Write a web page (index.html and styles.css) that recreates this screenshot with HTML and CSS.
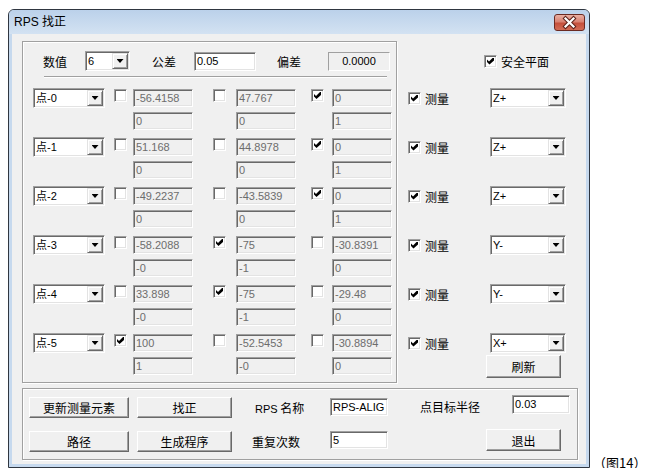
FILE: index.html
```html
<!DOCTYPE html>
<html lang="zh">
<head>
    <meta charset="UTF-8">
    <title>RPS 找正</title>
    <link rel="stylesheet" href="styles.css">
</head>
<body>
<div class="page">
    <div class="window">
        <div class="titlebar">
            <span class="title">RPS 找正</span>
            <span class="close">
                <svg width="29" height="15" viewBox="0 0 29 15">
                    <path d="M10.5 3.5 L18.5 11.5 M18.5 3.5 L10.5 11.5" stroke="#5c2119" stroke-width="4.2" stroke-linecap="square"/>
                    <path d="M10.5 3.5 L18.5 11.5 M18.5 3.5 L10.5 11.5" stroke="#fff" stroke-width="2.2" stroke-linecap="square"/>
                </svg>
            </span>
        </div>
        <div class="client">
            <div class="upper">
                <div class="group main-group">
                    <div class="head">
                        <span class="lbl">数值</span>
                        <div class="combo small"><span class="val">6</span><span class="drop"></span></div>
                        <span class="lbl">公差</span>
                        <div class="edit tol">0.05</div>
                        <span class="lbl">偏差</span>
                        <div class="static">0.0000</div>
                    </div>
                    <div class="sep"></div>
                    <div class="points">
                        <div class="pt-row">
                            <div class="combo"><span class="val">点-0</span><span class="drop"></span></div>
                            <span class="cb"></span>
                            <div class="edit dis">-56.4158</div>
                            <span class="cb"></span>
                            <div class="edit dis">47.767</div>
                            <span class="cb on"></span>
                            <div class="edit dis">0</div>
                            <div class="edit dis lo c3">0</div>
                            <div class="edit dis lo c5">0</div>
                            <div class="edit dis lo c7">1</div>
                        </div>
                        <div class="pt-row">
                            <div class="combo"><span class="val">点-1</span><span class="drop"></span></div>
                            <span class="cb"></span>
                            <div class="edit dis">51.168</div>
                            <span class="cb"></span>
                            <div class="edit dis">44.8978</div>
                            <span class="cb on"></span>
                            <div class="edit dis">0</div>
                            <div class="edit dis lo c3">0</div>
                            <div class="edit dis lo c5">0</div>
                            <div class="edit dis lo c7">1</div>
                        </div>
                        <div class="pt-row">
                            <div class="combo"><span class="val">点-2</span><span class="drop"></span></div>
                            <span class="cb"></span>
                            <div class="edit dis">-49.2237</div>
                            <span class="cb"></span>
                            <div class="edit dis">-43.5839</div>
                            <span class="cb on"></span>
                            <div class="edit dis">0</div>
                            <div class="edit dis lo c3">0</div>
                            <div class="edit dis lo c5">0</div>
                            <div class="edit dis lo c7">1</div>
                        </div>
                        <div class="pt-row">
                            <div class="combo"><span class="val">点-3</span><span class="drop"></span></div>
                            <span class="cb"></span>
                            <div class="edit dis">-58.2088</div>
                            <span class="cb on"></span>
                            <div class="edit dis">-75</div>
                            <span class="cb"></span>
                            <div class="edit dis">-30.8391</div>
                            <div class="edit dis lo c3">-0</div>
                            <div class="edit dis lo c5">-1</div>
                            <div class="edit dis lo c7">0</div>
                        </div>
                        <div class="pt-row">
                            <div class="combo"><span class="val">点-4</span><span class="drop"></span></div>
                            <span class="cb"></span>
                            <div class="edit dis">33.898</div>
                            <span class="cb on"></span>
                            <div class="edit dis">-75</div>
                            <span class="cb"></span>
                            <div class="edit dis">-29.48</div>
                            <div class="edit dis lo c3">-0</div>
                            <div class="edit dis lo c5">-1</div>
                            <div class="edit dis lo c7">0</div>
                        </div>
                        <div class="pt-row">
                            <div class="combo"><span class="val">点-5</span><span class="drop"></span></div>
                            <span class="cb on"></span>
                            <div class="edit dis">100</div>
                            <span class="cb"></span>
                            <div class="edit dis">-52.5453</div>
                            <span class="cb"></span>
                            <div class="edit dis">-30.8894</div>
                            <div class="edit dis lo c3">1</div>
                            <div class="edit dis lo c5">-0</div>
                            <div class="edit dis lo c7">0</div>
                        </div>
                    </div>
                </div>
                <div class="side">
                    <div class="side-head">
                        <span class="cb on"></span>
                        <span class="lbl">安全平面</span>
                    </div>
                    <div class="side-rows">
                        <div class="side-row"><span class="cb on"></span><span class="lbl">测量</span><div class="combo dir"><span class="val">Z+</span><span class="drop"></span></div></div>
                        <div class="side-row"><span class="cb on"></span><span class="lbl">测量</span><div class="combo dir"><span class="val">Z+</span><span class="drop"></span></div></div>
                        <div class="side-row"><span class="cb on"></span><span class="lbl">测量</span><div class="combo dir"><span class="val">Z+</span><span class="drop"></span></div></div>
                        <div class="side-row"><span class="cb on"></span><span class="lbl">测量</span><div class="combo dir"><span class="val">Y-</span><span class="drop"></span></div></div>
                        <div class="side-row"><span class="cb on"></span><span class="lbl">测量</span><div class="combo dir"><span class="val">Y-</span><span class="drop"></span></div></div>
                        <div class="side-row"><span class="cb on"></span><span class="lbl">测量</span><div class="combo dir"><span class="val">X+</span><span class="drop"></span></div></div>
                    </div>
                    <div class="btn refresh">刷新</div>
                </div>
            </div>
            <div class="group bottom-group">
                <div class="btn wide">更新测量元素</div>
                <div class="btn mid">找正</div>
                <span class="lbl name-lbl"><span class="latin">RPS</span> 名称</span>
                <div class="edit short top">RPS-ALIG</div>
                <span class="lbl radius-lbl">点目标半径</span>
                <div class="edit short radius">0.03</div>
                <div class="btn wide">路径</div>
                <div class="btn mid">生成程序</div>
                <span class="lbl">重复次数</span>
                <div class="edit short">5</div>
                <div class="btn exit">退出</div>
            </div>
        </div>
    </div>
    <div class="caption">（图14）</div>
</div>
</body>
</html>
```

FILE: styles.css
```css
body {
    margin: 0;
    background: #fff;
    font-family: "Liberation Sans", "Noto Sans CJK SC", sans-serif;
    font-size: 11px;
    color: #000;
}
.page {
    display: flex;
    align-items: flex-end;
    padding: 9px 0 0 8px;
}
.window {
    flex-shrink: 0;
    width: 582px;
    height: 459px;
    box-sizing: border-box;
    border: 1px solid #2f3640;
    border-radius: 6px 6px 0 0;
    background: #c6d9ee;
    display: flex;
    flex-direction: column;
}
.titlebar {
    height: 24px;
    display: flex;
    justify-content: space-between;
    align-items: flex-start;
    background: linear-gradient(#bbd1ea, #d3e2f2);
    border-radius: 5px 5px 0 0;
}
.title {
    padding: 5px 0 0 5px;
    font-size: 12px;
    line-height: 14px;
}
.close {
    margin: 4px 4px 0 0;
    width: 31px;
    height: 17px;
    box-sizing: border-box;
    border: 1px solid #6b2a22;
    border-radius: 3px;
    background: linear-gradient(#eab0a3, #d98272 45%, #c5503c 55%, #d26c56);
    display: flex;
}
.client {
    flex: 1;
    margin: 0 3px 3px;
    background: #f0f0f0;
}
.upper {
    display: flex;
    align-items: flex-start;
    padding: 7px 0 0 10px;
}
.group {
    box-sizing: border-box;
    border: 1px solid #a0a0a0;
    box-shadow: inset 1px 1px #fff, 1px 1px #fff;
}
.main-group {
    width: 375px;
    height: 342px;
    padding-top: 9px;
}
.lbl {
    font-family: "Noto Sans CJK SC", sans-serif;
    font-size: 12px;
    white-space: nowrap;
}
.latin {
    font-family: "Liberation Sans", sans-serif;
    font-size: 11px;
}
.head {
    display: grid;
    grid-template-columns: 42px 67px 42px 83px 51px 62px;
    height: 20px;
    align-items: center;
    padding-left: 20px;
}
.sep {
    margin: 5px 0 0 21px;
    width: 343px;
    height: 0;
    border-top: 1px solid #a0a0a0;
    border-bottom: 1px solid #fff;
}
.points {
    display: flex;
    flex-direction: column;
    gap: 7px;
    margin-top: 10px;
    padding-left: 10px;
}
.pt-row {
    display: grid;
    grid-template-columns: 81px 19px 80px 23px 75px 21px 60px;
    grid-template-rows: 24px 18px;
    align-items: start;
}
.pt-row .cb,
.pt-row .edit {
    margin-top: 1px;
}
.pt-row .lo {
    margin-top: 0;
}
.c3 { grid-column: 3; }
.c5 { grid-column: 5; }
.c7 { grid-column: 7; }

/* sunken controls */
.edit,
.combo,
.cb {
    box-sizing: border-box;
    border: 1px solid;
    border-color: #a0a0a0 #fff #fff #a0a0a0;
    box-shadow: inset 1px 1px #696969, inset -1px -1px #e3e3e3;
    background: #fff;
}
.edit {
    width: 60px;
    height: 18px;
    padding-left: 2px;
    line-height: 16px;
    white-space: nowrap;
    overflow: hidden;
}
.edit.dis {
    background: #f0f0f0;
    color: #6d6d6d;
}
.edit.tol {
    width: 62px;
    height: 19px;
    line-height: 17px;
}
.static {
    box-sizing: border-box;
    width: 62px;
    height: 19px;
    border: 1px solid;
    border-color: #a0a0a0 #fff #fff #a0a0a0;
    text-align: center;
    line-height: 17px;
}
.combo {
    width: 72px;
    height: 20px;
    padding: 1px;
    display: flex;
}
.combo.small {
    width: 45px;
}
.combo.dir {
    width: 76px;
}
.combo .val {
    flex: 1;
    padding-left: 1px;
    line-height: 16px;
    white-space: nowrap;
}
.drop {
    box-sizing: border-box;
    width: 16px;
    height: 16px;
    border: 1px solid;
    border-color: #e3e3e3 #696969 #696969 #e3e3e3;
    box-shadow: inset 1px 1px #fff, inset -1px -1px #a0a0a0;
    background: #f0f0f0;
    display: flex;
    align-items: center;
    justify-content: center;
}
.drop::after {
    content: "";
    width: 7px;
    height: 4px;
    background: #000;
    clip-path: polygon(0 0, 100% 0, 50% 100%);
}
.cb {
    width: 13px;
    height: 13px;
    display: flex;
    align-items: center;
    justify-content: center;
}
.cb.on::after {
    content: "";
    width: 7px;
    height: 7px;
    background: #000;
    clip-path: polygon(0 2px, 2px 4px, 6px 0, 7px 0, 7px 3px, 2.5px 7px, 0 4.5px);
}

/* raised buttons */
.btn {
    box-sizing: border-box;
    display: flex;
    align-items: center;
    justify-content: center;
    background: #f0f0f0;
    border: 1px solid;
    border-color: #fff #696969 #696969 #fff;
    box-shadow: inset -1px -1px #a0a0a0;
    font-family: "Noto Sans CJK SC", sans-serif;
    font-size: 12px;
    white-space: nowrap;
}

.side {
    padding-top: 10px;
    display: flex;
    flex-direction: column;
}
.side-head {
    height: 20px;
    display: flex;
    align-items: center;
    padding-left: 87px;
}
.side-head .lbl {
    margin-left: 4px;
}
.side-rows {
    margin-top: 17px;
    display: flex;
    flex-direction: column;
    gap: 29px;
}
.side-row {
    height: 20px;
    display: flex;
    align-items: center;
    padding-left: 11px;
}
.side-row .lbl {
    margin-left: 4px;
    width: 65px;
}
.refresh {
    margin: 2px 0 0 89px;
    width: 75px;
    height: 23px;
}

.bottom-group {
    margin: 5px 0 0 10px;
    width: 556px;
    height: 72px;
    padding: 6px 0 0 6px;
    display: grid;
    grid-template-columns: 108px 115px 78px 90px 66px 1fr;
    grid-template-rows: 34px 24px;
    align-items: start;
}
.bottom-group .btn {
    height: 21px;
    margin-top: 2px;
}
.btn.wide {
    width: 100px;
}
.btn.mid {
    width: 95px;
}
.bottom-group .lbl {
    line-height: 21px;
    margin-top: 2px;
}
.name-lbl {
    margin-left: 3px;
}
.bottom-group .radius-lbl {
    margin-top: 1px;
}
.edit.short {
    width: 58px;
    margin-top: 2px;
}
.edit.short.top {
    margin-top: 3px;
}
.edit.short.radius {
    margin: 0 0 0 26px;
    height: 19px;
    line-height: 17px;
}
.bottom-group .btn.exit {
    grid-column: 6;
    width: 75px;
    height: 22px;
    margin-top: 0;
}

.caption {
    flex-shrink: 0;
    margin: 0 0 -3px 3px;
    font-family: "Noto Sans CJK SC", serif;
    font-size: 13px;
    line-height: 17px;
    white-space: nowrap;
}
```
